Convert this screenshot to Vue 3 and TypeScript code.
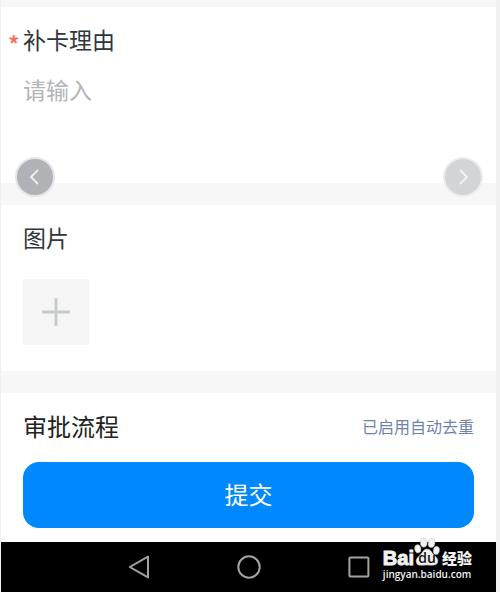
<script setup lang="ts">
import { ref } from 'vue'

const reason = ref('')
</script>

<template>
  <div class="screen">
    <main class="form">
      <section class="card reason">
        <label class="title required" for="reason">补卡理由</label>
        <textarea id="reason" v-model="reason" class="input" placeholder="请输入"></textarea>
      </section>

      <section class="card photos">
        <h2 class="title">图片</h2>
        <button class="add" type="button" aria-label="添加图片">
          <svg width="30" height="30" viewBox="0 0 30 30" aria-hidden="true">
            <path d="M15 2.3V27.7M2.3 15H27.7" fill="none" stroke="#c6c9ca" stroke-width="2.8" stroke-linecap="round" />
          </svg>
        </button>
      </section>

      <section class="card flow">
        <div class="row">
          <h2 class="title strong">审批流程</h2>
          <span class="note">已启用自动去重</span>
        </div>
        <button class="submit" type="button">提交</button>
      </section>
    </main>

    <nav class="system">
      <button class="key" type="button" aria-label="返回">
        <svg width="26" height="26" viewBox="0 0 26 26">
          <path d="M22 2.6V23.4L3.8 13Z" fill="none" stroke="#a3a3a3" stroke-width="2" stroke-linejoin="round" />
        </svg>
      </button>
      <button class="key" type="button" aria-label="主页">
        <svg width="26" height="26" viewBox="0 0 26 26">
          <circle cx="13" cy="13" r="10.7" fill="none" stroke="#a3a3a3" stroke-width="2" />
        </svg>
      </button>
      <button class="key" type="button" aria-label="最近任务">
        <svg width="26" height="26" viewBox="0 0 26 26">
          <rect x="3.4" y="3.4" width="19" height="19" rx="1" fill="none" stroke="#a3a3a3" stroke-width="2" />
        </svg>
      </button>
    </nav>

    <button class="arrow prev" type="button" aria-label="上一张">
      <svg width="36" height="36" viewBox="0 0 36 36">
        <path d="M21 11L14 18L21 25" fill="none" stroke="#f1f1f2" stroke-width="1.8" />
      </svg>
    </button>
    <button class="arrow next" type="button" aria-label="下一张">
      <svg width="36" height="36" viewBox="0 0 36 36">
        <path d="M15 11L22 18L15 25" fill="none" stroke="#f4f4f5" stroke-width="1.8" />
      </svg>
    </button>

    <div class="watermark">
      <div class="brand">
        <span class="bai">Bai</span>
        <svg class="paw" width="26" height="30" viewBox="0 0 26 30">
          <g fill="#f2f2f2" stroke="#b9b9b9" stroke-width="0.5">
            <ellipse cx="3.8" cy="11.8" rx="3.1" ry="4.1" transform="rotate(-12 3.8 11.8)" />
            <ellipse cx="9.8" cy="5.6" rx="3.3" ry="4.6" />
            <ellipse cx="17.6" cy="6" rx="3.3" ry="4.6" transform="rotate(10 17.6 6)" />
            <ellipse cx="22.4" cy="13.4" rx="3" ry="4.1" transform="rotate(12 22.4 13.4)" />
            <path d="M13 12C16.5 12 17.6 15.4 19.6 17.5C22 20 24.4 21.6 23.8 24.8C23 29.2 18.4 28.2 13 28C7.6 28.2 3 29.4 2.2 25C1.6 21.6 4.4 19.6 6.6 17.4C8.6 15.4 9.6 12 13 12Z" />
          </g>
          <text x="13" y="26" text-anchor="middle">du</text>
        </svg>
        <span class="cn">经验</span>
      </div>
      <div class="site">jingyan.baidu.com</div>
    </div>
  </div>
</template>

<style>
body {
  background: #f0f0f0;
}
</style>

<style scoped>
.screen {
  position: relative;
  box-sizing: border-box;
  min-height: 100vh;
  display: flex;
  flex-direction: column;
  padding: 0 4px 0 1px;
  background: #f0f0f0;
  font-family: "Noto Sans CJK SC", sans-serif;
}

button {
  border: 0;
  padding: 0;
  margin: 0;
  font-family: inherit;
  cursor: pointer;
}

svg {
  display: block;
}

.form {
  flex: 1;
  display: flex;
  flex-direction: column;
  gap: 22px;
  padding-top: 7px;
  background: #f7f7f7;
}

.card {
  box-sizing: border-box;
  padding: 14px 22px;
  background: #fff;
}

.title {
  display: block;
  margin: 0;
  font-size: 23px;
  line-height: 36px;
  font-weight: 400;
  color: #30363c;
}

.required {
  position: relative;
}

.required::before {
  content: "*";
  position: absolute;
  left: -15px;
  top: 5px;
  color: #ff6a55;
  font-size: 24px;
  font-weight: 500;
}

.input {
  display: block;
  box-sizing: border-box;
  width: 100%;
  height: 98px;
  margin-top: 14px;
  padding: 0;
  border: 0;
  outline: 0;
  resize: none;
  background: transparent;
  font-family: inherit;
  font-size: 23px;
  line-height: 36px;
  color: #30363c;
}

.input::placeholder {
  color: #b2b5b7;
  opacity: 1;
}

.photos {
  padding-bottom: 26px;
}

.add {
  display: flex;
  align-items: center;
  justify-content: center;
  width: 66px;
  height: 66px;
  margin-top: 24px;
  background: #f5f5f5;
}

.flow {
  flex: 1;
}

.row {
  display: flex;
  align-items: center;
  justify-content: space-between;
}

.strong {
  font-size: 24px;
  line-height: 38px;
  color: #222;
}

.note {
  font-size: 16px;
  color: #6f82ad;
}

.submit {
  display: block;
  width: 100%;
  height: 66px;
  margin-top: 17px;
  padding-bottom: 3px;
  border-radius: 16px;
  background: #0088ff;
  color: #fff;
  font-size: 24px;
  line-height: 36px;
}

.system {
  display: flex;
  align-items: center;
  justify-content: center;
  gap: 84px;
  height: 50px;
  background: #000;
}

.key {
  background: transparent;
}

.arrow {
  position: absolute;
  top: 157px;
  box-sizing: border-box;
  width: 40px;
  height: 40px;
  border: 2px solid #e6e6e8;
  border-radius: 50%;
}

.prev {
  left: 15px;
  background: #b1b2b7;
}

.next {
  right: 17px;
  border-color: #ededee;
  background: #d3d4d6;
}

.watermark {
  position: absolute;
  right: 28px;
  bottom: 11px;
  color: #f2f2f2;
}

.brand {
  display: flex;
  align-items: flex-end;
  line-height: 18px;
}

.bai {
  font-family: "Liberation Sans", sans-serif;
  font-size: 20px;
  font-weight: 700;
  -webkit-text-stroke: 1px #f2f2f2;
}

.paw text {
  fill: #111;
  font-family: "Open Sans", sans-serif;
  font-size: 14px;
  font-weight: 600;
}

.cn {
  margin-left: 2px;
  font-size: 15px;
  font-weight: 900;
}

.site {
  font-family: "Open Sans", sans-serif;
  font-size: 10px;
  font-weight: 600;
  line-height: 14px;
}
</style>
